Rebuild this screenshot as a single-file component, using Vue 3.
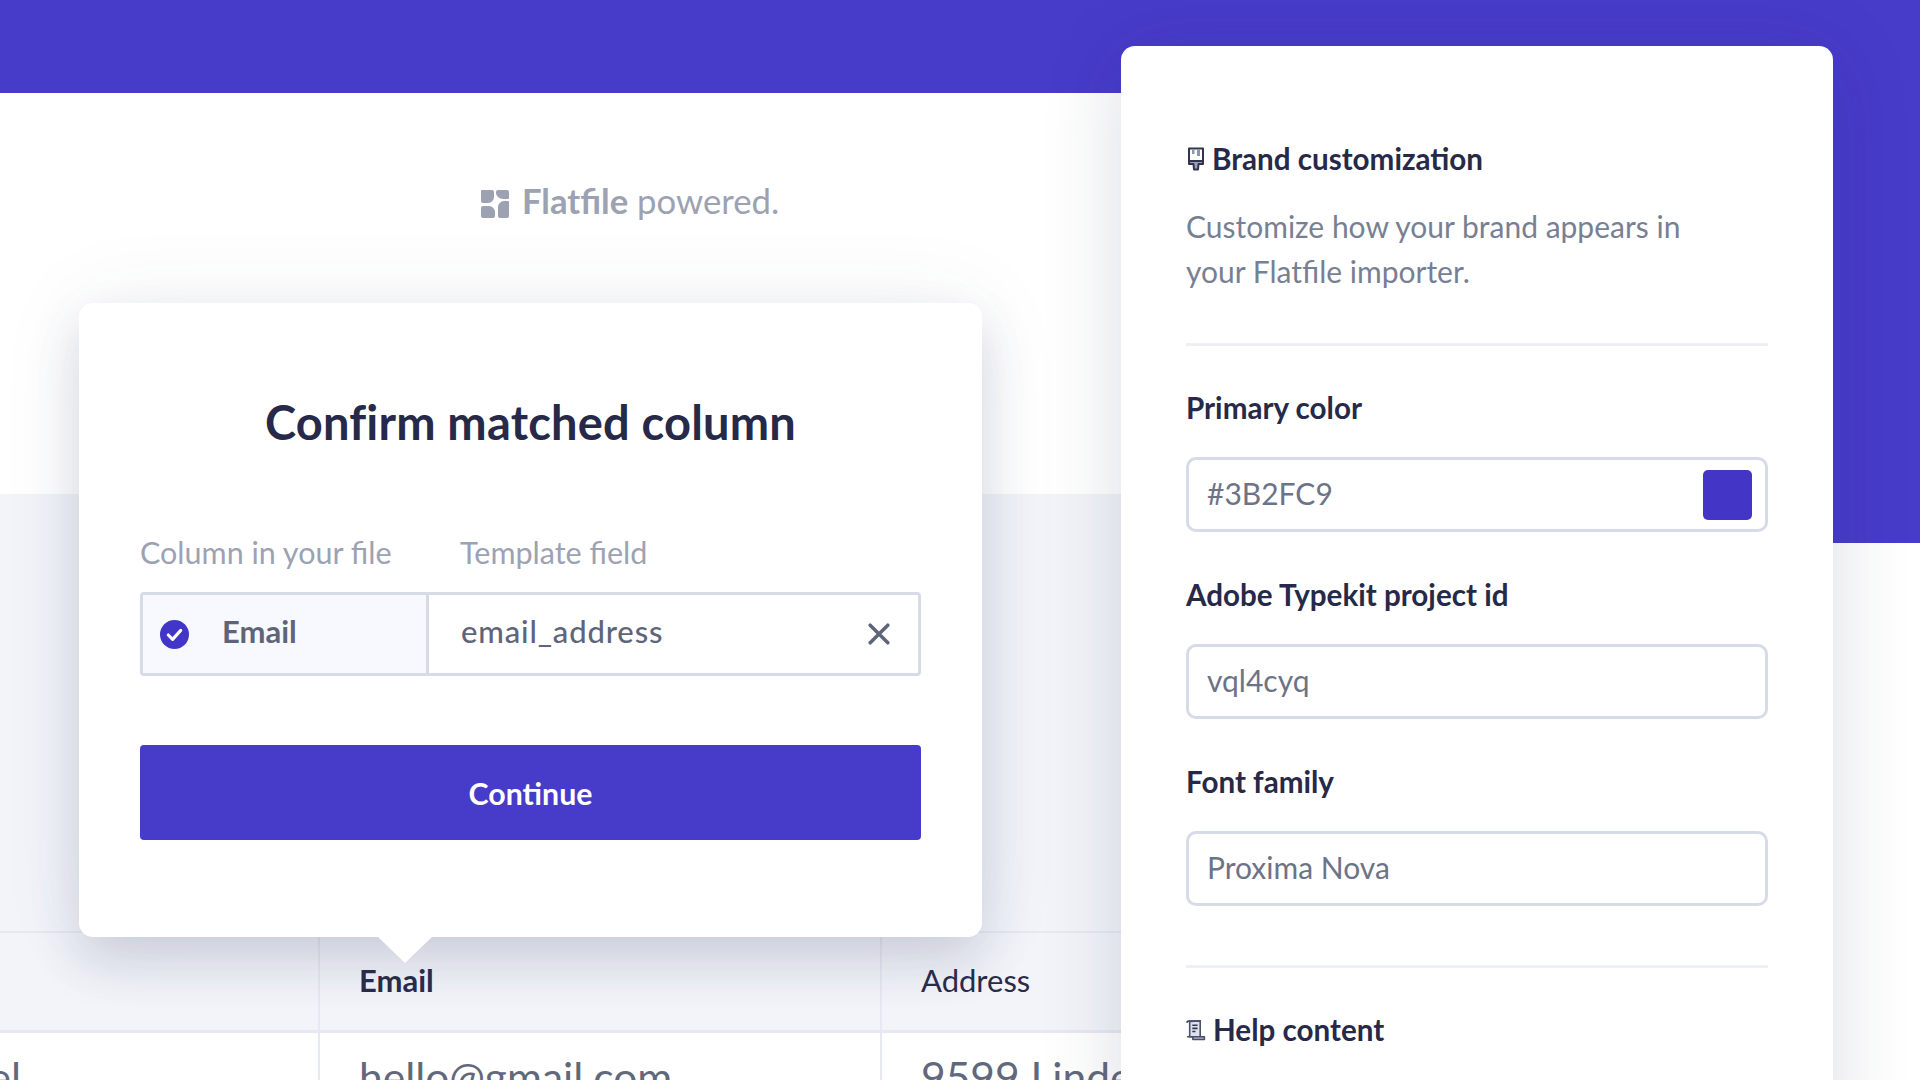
<script setup>
const fields = [
  { label: 'Primary color', value: '#3B2FC9', swatch: true },
  { label: 'Adobe Typekit project id', value: 'vql4cyq' },
  { label: 'Font family', value: 'Proxima Nova' }
]
</script>

<template>
  <div class="page">
    <div class="top-bar"></div>
    <div class="side-band"></div>

    <section class="intro">
      <div class="powered">
        <svg class="logo" viewBox="0 0 28 28" width="28" height="28">
          <path d="M1 0h10a2 2 0 0 1 2 2v5c0 3-3 6-6 6H2a2 2 0 0 1-2-2V1a1 1 0 0 1 1-1z" />
          <path d="M17 0h9a2 2 0 0 1 2 2v6a1 1 0 0 1-1 1h-5c-3 0-7-3-7-6V2a2 2 0 0 1 2-2z" />
          <path d="M23 11h4a1 1 0 0 1 1 1v14a2 2 0 0 1-2 2h-7a2 2 0 0 1-2-2v-9c0-3 3-6 6-6z" />
          <path d="M2 16h6c3 0 6 3 6 6v4a2 2 0 0 1-2 2H2a2 2 0 0 1-2-2v-8a2 2 0 0 1 2-2z" />
        </svg>
        <span class="powered-text"><b>Flatfile</b> powered.</span>
      </div>
    </section>

    <section class="table-area">
      <div class="table-gap"></div>
      <div class="table-row table-head">
        <div class="cell first"></div>
        <div class="cell strong">Email</div>
        <div class="cell">Address</div>
      </div>
      <div class="table-row table-body">
        <div class="cell first">Michael</div>
        <div class="cell">hello@gmail.com</div>
        <div class="cell">9599 Lindell Ave</div>
      </div>
    </section>

    <div class="match-card">
      <h1>Confirm matched column</h1>
      <div class="match-labels">
        <span class="label-left">Column in your file</span>
        <span>Template field</span>
      </div>
      <div class="match-input">
        <div class="match-source">
          <svg viewBox="0 0 28 28" width="29" height="29">
            <circle cx="14" cy="14" r="14" fill="#4236c8" />
            <path d="M8 14.500l4.200 4.200L20 10" fill="none" stroke="#fff" stroke-width="3" stroke-linecap="round" stroke-linejoin="round" />
          </svg>
          <span>Email</span>
        </div>
        <div class="match-target">
          <span>email_address</span>
          <svg viewBox="0 0 20 20" width="22" height="22">
            <path d="M2 2l16 16M18 2L2 18" stroke="#5f6579" stroke-width="3.200" stroke-linecap="round" />
          </svg>
        </div>
      </div>
      <button class="continue">Continue</button>
      <div class="arrow"></div>
    </div>

    <aside class="panel">
      <h2 class="panel-title">
        <svg viewBox="0 0 18 24" width="18" height="24">
          <path d="M2 1.500h14v12.500H2z" fill="#fff" stroke="#30344f" stroke-width="2" stroke-linejoin="round" />
          <path d="M5 2h2.500v5H5zM10 2h3v7h-3z" fill="#8f95ab" />
          <path d="M2 14h14v3h-4.500l-.5 5.500H7l-.5-5.500H2z" fill="#9aa0b5" stroke="#30344f" stroke-width="2" stroke-linejoin="round" />
        </svg>
        Brand customization
      </h2>
      <p class="panel-desc">Customize how your brand appears in your Flatfile importer.</p>
      <hr />

      <div v-for="f in fields" :key="f.label" class="field">
        <label>{{ f.label }}</label>
        <div class="field-box">
          <span>{{ f.value }}</span>
          <i v-if="f.swatch" class="swatch"></i>
        </div>
      </div>

      <hr class="bottom-rule" />

      <h2 class="panel-title help">
        <svg viewBox="0 0 19 20" width="20" height="21">
          <path d="M1 2.500C1 1.500 2 1 3 1h10.500v14" fill="none" stroke="#30344f" stroke-width="1.500" />
          <path d="M3.500 1.500v14.500h10v-15z" fill="#dfe2ec" stroke="#4a4f6b" stroke-width="1.500" />
          <path d="M6 5h5M6 8h5M6 11h3" stroke="#30344f" stroke-width="1.500" />
          <path d="M1.500 16h5v2.500h11V16z" fill="#b3b8ca" stroke="#4a4f6b" stroke-width="1.500" stroke-linejoin="round" />
        </svg>
        Help content
      </h2>
    </aside>
  </div>
</template>

<style scoped>
.page {
  position: relative;
  width: 1920px;
  height: 1080px;
  overflow: hidden;
  background: #fff;
  font-family: Lato, "Liberation Sans", sans-serif;
}

.top-bar {
  height: 93px;
  background: #473bca;
}

.side-band {
  position: absolute;
  top: 0;
  right: 0;
  width: 200px;
  height: 543px;
  background: #473bca;
}

.intro {
  width: 1200px;
  height: 401px;
  padding: 93px 0 0 481px;
  box-sizing: border-box;
}

.powered {
  display: flex;
  align-items: center;
  gap: 13px;
  height: 36px;
  color: #9ca2b2;
}

.logo {
  fill: #9ca2b2;
}

.powered-text {
  margin-top: -7px;
  font-size: 34.700px;
  line-height: 36px;
  white-space: nowrap;
}

.powered-text b {
  font-weight: 700;
}

.table-area {
  width: 1200px;
  height: 586px;
  background: #f2f4f9;
}

.table-gap {
  height: 437px;
  border-bottom: 2px solid #e6e9f1;
}

.table-row {
  display: grid;
  grid-template-columns: 318px 562px 320px;
}

.table-head {
  height: 97px;
  border-bottom: 3px solid #e6e9f1;
  font-size: 31px;
  color: #2a2d4a;
}

.table-head .cell {
  padding-top: 28px;
}

.table-body {
  height: 60px;
  background: #fff;
  font-size: 42.500px;
  color: #62687c;
}

.table-body .cell {
  padding-top: 18px;
}

.cell {
  border-left: 2px solid #e6e9f1;
  padding-left: 39px;
  box-sizing: border-box;
  white-space: nowrap;
  overflow: hidden;
}

.cell.first {
  border-left: 0;
  padding-left: 0;
  text-indent: -126px;
}

.strong {
  font-weight: 700;
}

.match-card {
  position: absolute;
  left: 79px;
  top: 303px;
  width: 903px;
  height: 634px;
  box-sizing: border-box;
  padding: 0 61px;
  background: #fff;
  border-radius: 14px;
  box-shadow: 0 24px 50px rgba(40, 44, 80, 0.16), 0 0 90px rgba(60, 66, 110, 0.07);
}

.match-card h1 {
  margin: 90px 0 0;
  text-align: center;
  font-size: 47px;
  line-height: 58px;
  font-weight: 700;
  letter-spacing: 0.2px;
  color: #262947;
}

.match-labels {
  display: flex;
  margin-top: 82px;
  font-size: 30.500px;
  line-height: 38px;
  color: #9ca2b2;
}

.label-left {
  width: 320px;
}

.match-input {
  display: flex;
  height: 84px;
  margin-top: 21px;
  border: 3px solid #d6dbe7;
  border-radius: 4px;
  box-sizing: border-box;
  font-size: 31px;
}

.match-source {
  display: flex;
  align-items: center;
  gap: 33px;
  width: 286px;
  padding-left: 17px;
  box-sizing: border-box;
  background: #f7f9ff;
  border-right: 3px solid #d6dbe7;
  font-weight: 700;
  color: #5f6579;
}

.match-source span,
.match-target span {
  padding-bottom: 6px;
}

.match-target {
  flex: 1;
  display: flex;
  align-items: center;
  justify-content: space-between;
  padding: 0 28px 0 32px;
  color: #5f6579;
  font-weight: 500;
  letter-spacing: 0.850px;
}

.continue {
  display: block;
  width: 100%;
  height: 95px;
  margin-top: 69px;
  border: none;
  border-radius: 4px;
  background: #473bca;
  color: #fff;
  font-family: inherit;
  font-size: 30.300px;
  font-weight: 700;
}

.arrow {
  position: absolute;
  left: 299px;
  top: 100%;
  width: 0;
  height: 0;
  border-left: 27px solid transparent;
  border-right: 27px solid transparent;
  border-top: 26px solid #fff;
}

.panel {
  position: absolute;
  left: 1121px;
  top: 46px;
  width: 712px;
  height: 1100px;
  box-sizing: border-box;
  padding: 93px 65px 0;
  background: #fff;
  border-radius: 14px 14px 0 0;
  box-shadow: 0 10px 80px rgba(40, 44, 80, 0.16);
}

.panel-title {
  display: flex;
  align-items: center;
  gap: 7px;
  margin: 0;
  font-size: 29.600px;
  line-height: 40px;
  font-weight: 700;
  color: #262947;
}

.panel-title svg {
  margin-left: 1px;
}

.panel-desc {
  width: 520px;
  margin: 25px 0 0;
  font-size: 30px;
  line-height: 45px;
  color: #787f93;
}

hr {
  height: 3px;
  margin: 49px 0 0;
  border: none;
  background: #eef0f6;
}

.field {
  margin-top: 44px;
}

.field + .field {
  margin-top: 45px;
}

.field label {
  display: block;
  font-size: 29.600px;
  line-height: 36px;
  font-weight: 700;
  color: #262947;
}

.field-box {
  display: flex;
  align-items: center;
  justify-content: space-between;
  height: 75px;
  margin-top: 31px;
  padding: 0 13px 0 18px;
  border: 3px solid #d6dbe7;
  border-radius: 10px;
  box-sizing: border-box;
  font-size: 30px;
  color: #6d7387;
}

.field-box span {
  padding-bottom: 4px;
}

.swatch {
  width: 49px;
  height: 50px;
  border-radius: 5px;
  background: #4336c6;
}

.bottom-rule {
  margin-top: 59px;
}

.help {
  margin-top: 42px;
}

.help svg {
  margin-left: 0;
}
</style>

<style>
html, body {
  margin: 0;
  background: #fff;
}
</style>
